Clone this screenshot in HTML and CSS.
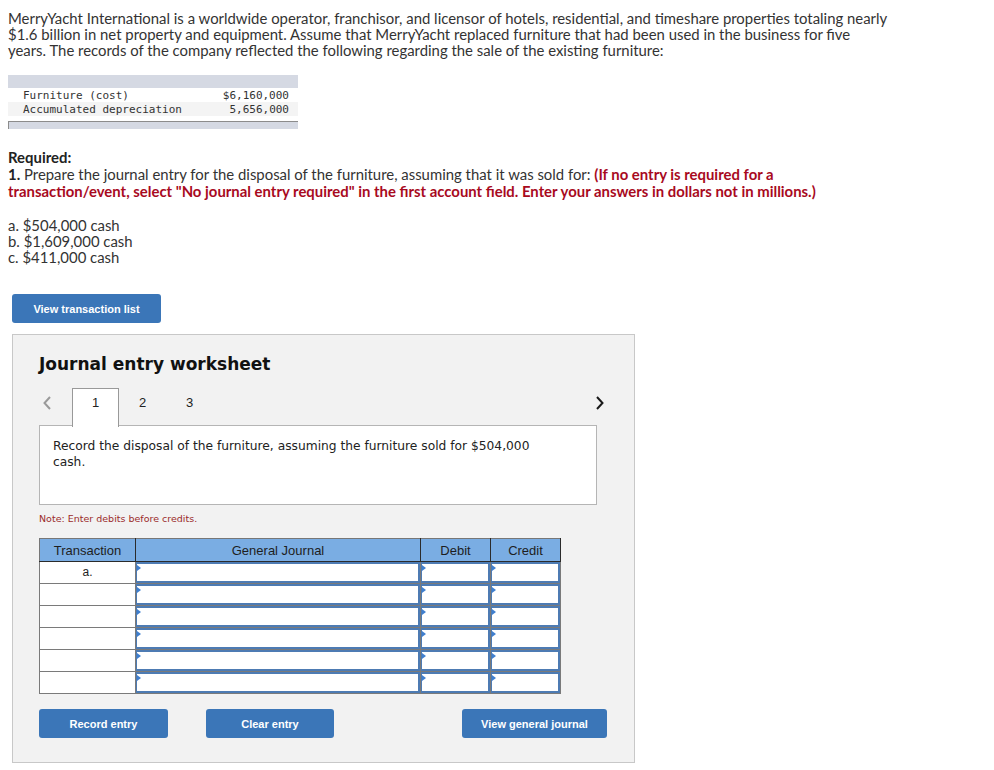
FILE: index.html
```html
<!DOCTYPE html>
<html>
<head>
<meta charset="utf-8">
<link rel="stylesheet" href="styles.css">
</head>
<body>
<div class="page">
  <p class="intro">MerryYacht International is a worldwide operator, franchisor, and licensor of hotels, residential, and timeshare properties totaling nearly $1.6 billion in net property and equipment. Assume that MerryYacht replaced furniture that had been used in the business for five years. The records of the company reflected the following regarding the sale of the existing furniture:</p>

  <div class="facts">
    <div class="facts-head"></div>
    <div class="facts-row"><span>Furniture (cost)</span><span>$6,160,000</span></div>
    <div class="facts-row alt"><span>Accumulated depreciation</span><span>5,656,000</span></div>
    <div class="facts-foot"></div>
  </div>

  <div class="required">
    <div class="req-title">Required:</div>
    <div><b>1.</b> Prepare the journal entry for the disposal of the furniture, assuming that it was sold for: <span class="warn">(If no entry is required for a transaction/event, select "No journal entry required" in the first account field. Enter your answers in dollars not in millions.)</span></div>
  </div>

  <div class="cases">
    <div>a. $504,000 cash</div>
    <div>b. $1,609,000 cash</div>
    <div>c. $411,000 cash</div>
  </div>

  <button class="btn btn-list">View transaction list</button>

  <div class="worksheet">
    <h2 class="ws-title">Journal entry worksheet</h2>
    <div class="tabs">
      <div class="tab-group">
        <span class="chev chev-left"><svg width="10" height="16" viewBox="0 0 10 16"><path d="M8 2 L2.5 8 L8 14" fill="none" stroke="#9a9a9a" stroke-width="2"/></svg></span>
        <div class="tab active">1</div>
        <div class="tab">2</div>
        <div class="tab">3</div>
      </div>
      <span class="chev chev-right"><svg width="10" height="16" viewBox="0 0 10 16"><path d="M2 2 L7.5 8 L2 14" fill="none" stroke="#1a1a1a" stroke-width="2"/></svg></span>
    </div>
    <div class="ws-box">
      <p>Record the disposal of the furniture, assuming the furniture sold for $504,000 cash.</p>
    </div>
    <div class="note">Note: Enter debits before credits.</div>

    <table class="journal">
      <thead>
        <tr><th class="c-tr">Transaction</th><th class="c-gj">General Journal</th><th class="c-dr">Debit</th><th class="c-cr">Credit</th></tr>
      </thead>
      <tbody>
        <tr><td class="tr">a.</td><td><div class="inp"></div></td><td><div class="inp"></div></td><td><div class="inp"></div></td></tr>
        <tr><td class="tr"></td><td><div class="inp"></div></td><td><div class="inp"></div></td><td><div class="inp"></div></td></tr>
        <tr><td class="tr"></td><td><div class="inp"></div></td><td><div class="inp"></div></td><td><div class="inp"></div></td></tr>
        <tr><td class="tr"></td><td><div class="inp"></div></td><td><div class="inp"></div></td><td><div class="inp"></div></td></tr>
        <tr><td class="tr"></td><td><div class="inp"></div></td><td><div class="inp"></div></td><td><div class="inp"></div></td></tr>
        <tr><td class="tr"></td><td><div class="inp"></div></td><td><div class="inp"></div></td><td><div class="inp"></div></td></tr>
      </tbody>
    </table>

    <div class="actions">
      <button class="btn btn-record">Record entry</button>
      <button class="btn btn-clear">Clear entry</button>
      <button class="btn btn-view">View general journal</button>
    </div>
  </div>
</div>
</body>
</html>
```

FILE: styles.css
```css
html, body {
  margin: 0;
  padding: 0;
  background: #ffffff;
}

.page {
  padding: 10px 0 0 8px;
  font-family: "Lato", "Open Sans", sans-serif;
  font-size: 14.9px;
  color: #333333;
}

.intro {
  margin: 0;
  width: 879px;
  line-height: 16px;
}

.facts {
  margin-top: 17px;
  width: 290px;
  font-family: "DejaVu Sans Mono", "Liberation Mono", monospace;
  font-size: 11px;
  color: #333333;
}

.facts-head {
  height: 13px;
  background: #d5d9e3;
}

.facts-row {
  display: flex;
  justify-content: space-between;
  height: 14px;
  line-height: 16px;
  padding: 0 9px 0 15px;
}

.facts-row.alt {
  background: #f4f4f4;
}

.facts-foot {
  margin-top: 5px;
  height: 7px;
  background: #d5d9e3;
  border-top: 1px solid #8c8c8c;
  border-left: 1px solid #8c8c8c;
}

.required {
  margin-top: 20px;
  line-height: 17px;
  width: 880px;
}

.req-title {
  font-weight: bold;
  color: #222222;
}

.required b {
  color: #222222;
}

.warn {
  color: #a80a1e;
  font-weight: bold;
}

.cases {
  margin-top: 17px;
  line-height: 16px;
}

.btn {
  display: block;
  background: #3b76b8;
  color: #ffffff;
  border: none;
  border-radius: 3px;
  font-family: "Liberation Sans", Arial, sans-serif;
  font-weight: bold;
  font-size: 11px;
  height: 29px;
  padding: 0;
  cursor: pointer;
}

.btn-list {
  margin: 29px 0 0 4px;
  width: 149px;
}

.worksheet {
  margin: 11px 0 0 4px;
  width: 595px;
  background: #f2f2f2;
  border: 1px solid #c8c8c8;
  padding: 18px 0 24px 26px;
  display: flex;
  flex-direction: column;
}

.ws-title {
  margin: 0;
  font-family: "DejaVu Sans", Verdana, sans-serif;
  font-size: 17px;
  line-height: 22px;
  font-weight: bold;
  color: #111111;
}

.tabs {
  margin-top: 13px;
  width: 568px;
  display: flex;
  justify-content: space-between;
  align-items: flex-start;
  position: relative;
  z-index: 1;
}

.tab-group {
  display: flex;
  align-items: flex-start;
}

.chev {
  display: block;
  height: 16px;
  margin-top: 7px;
}

.chev svg {
  display: block;
}

.chev-left {
  width: 33px;
  padding-left: 3px;
  box-sizing: border-box;
}

.chev-right {
  margin-right: 2px;
}

.tab {
  width: 47px;
  height: 38px;
  box-sizing: border-box;
  text-align: center;
  padding-top: 7px;
  font-family: "Liberation Sans", Arial, sans-serif;
  font-size: 13px;
  line-height: 16px;
  color: #222222;
}

.tab.active {
  background: #ffffff;
  border: 1px solid #999999;
  border-bottom: none;
  height: 39px;
  padding-top: 6px;
  margin-bottom: -1px;
}

.ws-box {
  width: 558px;
  height: 80px;
  box-sizing: border-box;
  background: #ffffff;
  border: 1px solid #b5b5b5;
  padding: 12px 40px 0 13px;
  margin-top: -1px;
}

.ws-box p {
  margin: 0;
  font-family: "DejaVu Sans", Verdana, sans-serif;
  font-size: 12.25px;
  line-height: 16px;
  color: #222222;
}

.note {
  margin-top: 7px;
  font-family: "DejaVu Sans", Verdana, sans-serif;
  font-size: 9.5px;
  line-height: 13px;
  color: #9b2b2b;
}

.journal {
  margin-top: 13px;
  width: 522px;
  border-collapse: collapse;
  table-layout: fixed;
  font-family: "Liberation Sans", Arial, sans-serif;
  font-size: 13px;
  color: #1e1e1e;
}

.journal th {
  background: #7aade3;
  height: 22px;
  padding: 0;
  font-weight: normal;
  border: 1px solid #2b2b2b;
  border-top-color: #777777;
}

.journal th.c-tr { border-left-color: #777777; }

.journal th.c-gj { width: 284px; text-align: center; }
.journal th.c-tr { width: 95px; }
.journal th.c-dr { width: 69px; }
.journal th.c-cr { width: 69px; }

.journal td {
  height: 21px;
  padding: 0;
  border: 1px solid #7a7a7a;
  background: #ffffff;
  vertical-align: top;
}

.journal td.tr {
  text-align: center;
  font-size: 12px;
  line-height: 20px;
}

.inp {
  height: 21px;
  box-sizing: border-box;
  border: 2px solid #4d7bb3;
  border-left-width: 1px;
  position: relative;
}

.inp::before {
  content: "";
  position: absolute;
  left: 0;
  top: 1px;
  border-left: 4px solid #3f7fcf;
  border-top: 3px solid transparent;
  border-bottom: 3px solid transparent;
}

.actions {
  margin-top: 15px;
  width: 568px;
  display: flex;
}

.btn-record { width: 129px; }
.btn-clear { width: 128px; margin-left: 38px; }
.btn-view { width: 145px; margin-left: auto; }
```
